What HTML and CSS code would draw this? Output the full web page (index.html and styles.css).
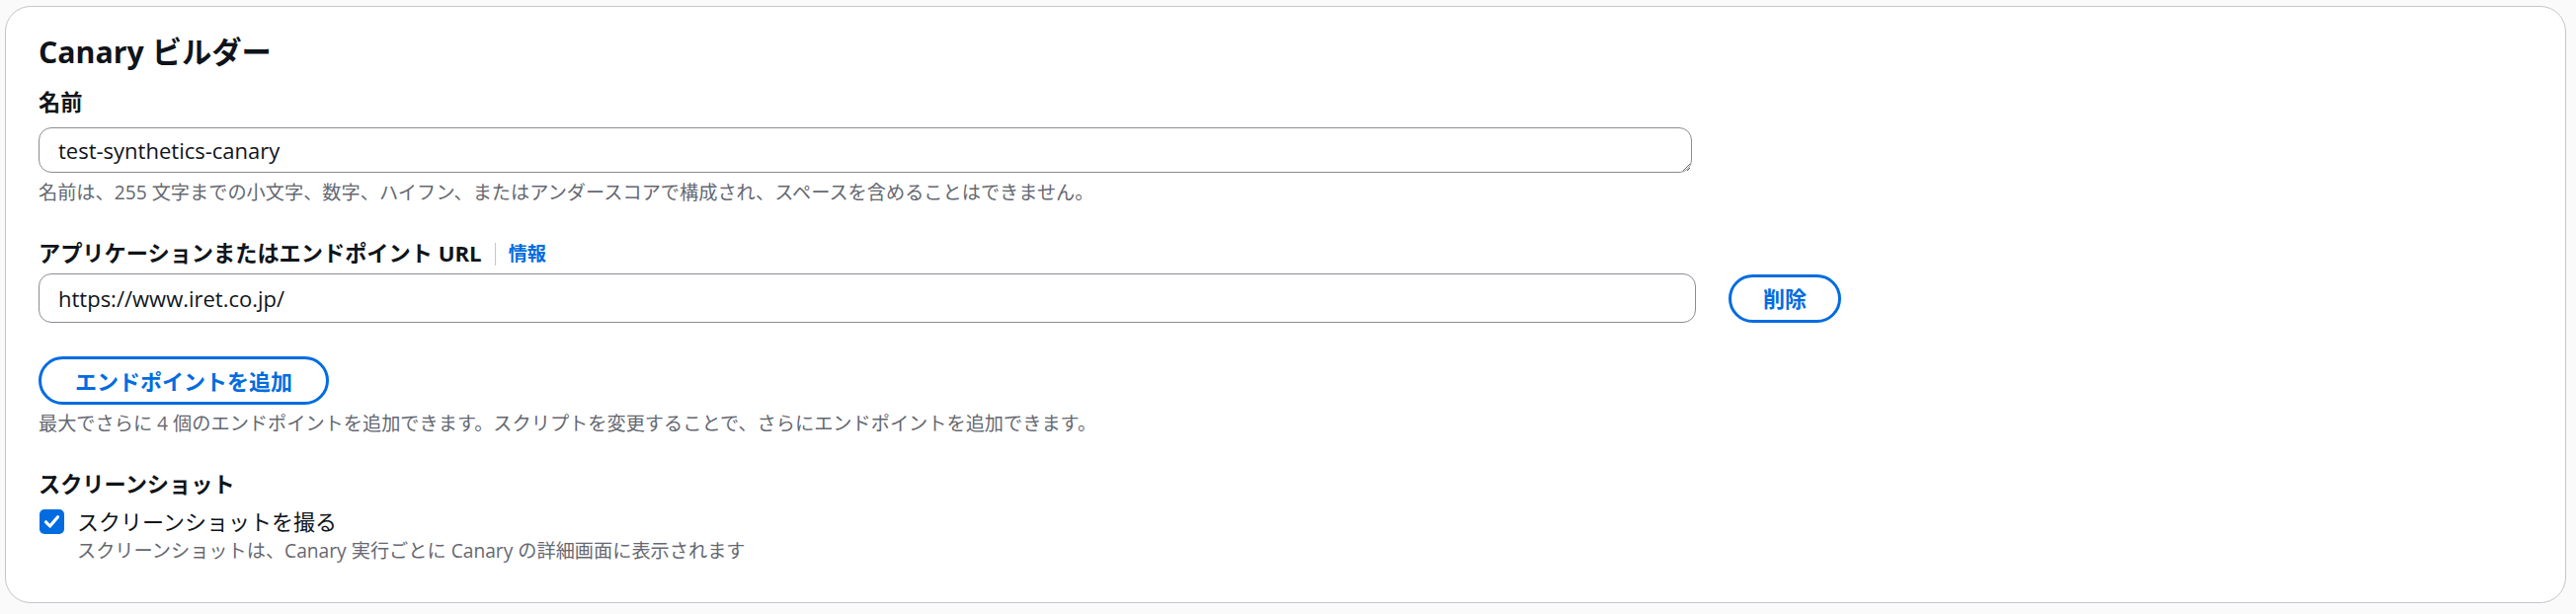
FILE: index.html
```html
<!DOCTYPE html>
<html lang="ja">
<head>
<meta charset="utf-8">
<title>Canary ビルダー</title>
<link rel="stylesheet" href="styles.css">
</head>
<body>
<section class="card">
  <h2 class="card-title">Canary ビルダー</h2>

  <div class="field field-name">
    <label class="label" for="name">名前</label>
    <textarea id="name" class="textarea" rows="1">test-synthetics-canary</textarea>
    <p class="desc desc-name">名前は、255 文字までの小文字、数字、ハイフン、またはアンダースコアで構成され、スペースを含めることはできません。</p>
  </div>

  <div class="field field-url">
    <div class="label-row">
      <label class="label" for="url">アプリケーションまたはエンドポイント URL</label>
      <span class="divider"></span>
      <a class="info" href="#">情報</a>
    </div>
    <div class="url-row">
      <input id="url" class="input" type="text" value="https://www.iret.co.jp/">
      <button class="btn btn-remove" type="button">削除</button>
    </div>
  </div>

  <div class="field field-add">
    <button class="btn btn-add" type="button">エンドポイントを追加</button>
    <p class="desc desc-add">最大でさらに 4 個のエンドポイントを追加できます。スクリプトを変更することで、さらにエンドポイントを追加できます。</p>
  </div>

  <div class="field field-shot">
    <div class="label">スクリーンショット</div>
    <div class="check-row">
      <span class="checkbox">
        <svg width="25" height="25" viewBox="0 0 25 25"><path d="M6.5 12.8 L10.6 17 L18.5 7.8" fill="none" stroke="#fff" stroke-width="3.2" stroke-linecap="round" stroke-linejoin="round"/></svg>
      </span>
      <div class="check-text">
        <div class="check-label">スクリーンショットを撮る</div>
        <div class="desc check-desc">スクリーンショットは、Canary 実行ごとに Canary の詳細画面に表示されます</div>
      </div>
    </div>
  </div>
</section>
</body>
</html>
```

FILE: styles.css
```css
* { box-sizing: border-box; }

html, body {
  margin: 0;
  background: #fafafa;
}

body {
  padding: 6px 10px 0 5px;
  font-family: "Open Sans", "Noto Sans CJK JP", sans-serif;
  color: #0f141a;
  font-size: 22px;
  line-height: 34px;
}

.card {
  background: #ffffff;
  border: 1px solid #c6c6cd;
  border-radius: 26px;
  padding: 27px 33px 38px 33px;
  height: 605px;
}

.card-title {
  margin: 0;
  font-size: 30.3px;
  line-height: 37px;
  font-weight: 700;
}

.field { display: flex; flex-direction: column; align-items: flex-start; }

.label {
  font-weight: 700;
  font-size: 22.2px;
  line-height: 34px;
}

.field-name { margin-top: 16px; }

.textarea {
  margin-top: 8px;
  width: 1674px;
  height: 46px;
  border: 1px solid #8c8c94;
  border-radius: 13px;
  padding: 5px 19px;
  font-family: inherit;
  font-size: 22px;
  line-height: 34px;
  color: #0f141a;
  resize: both;
  overflow: hidden;
  display: block;
}

.desc {
  margin: 0;
  color: #656871;
  font-size: 19.2px;
  line-height: 25px;
}

.desc-name { margin-top: 7px; }

.field-url { margin-top: 33px; }

.label-row { display: flex; align-items: center; }

.divider {
  width: 1px;
  height: 23px;
  background: #c6c6cd;
  margin: 0 13px 0 13px;
}

.info {
  color: #006ce0;
  text-decoration: none;
  font-size: 19.2px;
  font-weight: 700;
}

.url-row {
  display: flex;
  align-items: center;
  gap: 33px;
  margin-top: 3px;
}

.input {
  width: 1678px;
  height: 50px;
  border: 1px solid #8c8c94;
  border-radius: 13px;
  padding: 0 19px;
  font-family: inherit;
  font-size: 22px;
  color: #0f141a;
  background: #fff;
}

.btn {
  height: 49px;
  border: 3px solid #006ce0;
  border-radius: 999px;
  background: #fff;
  color: #006ce0;
  font-family: inherit;
  font-weight: 700;
  font-size: 22px;
  padding: 0 32px;
  line-height: 1;
}

.btn-remove { width: 114px; padding: 0; }

.field-add { margin-top: 34px; }

.btn-add { width: 294px; padding: 0; }

.desc-add { margin-top: 6px; }

.field-shot { margin-top: 33px; }

.check-row {
  display: flex;
  align-items: flex-start;
  margin-top: 3px;
}

.checkbox {
  width: 25px;
  height: 25px;
  margin-top: 5px;
  margin-left: 1px;
  border-radius: 5px;
  background: #006ce0;
  display: flex;
}

.check-text { margin-left: 13px; }

.check-label {
  font-size: 22px;
  line-height: 34px;
}
```
